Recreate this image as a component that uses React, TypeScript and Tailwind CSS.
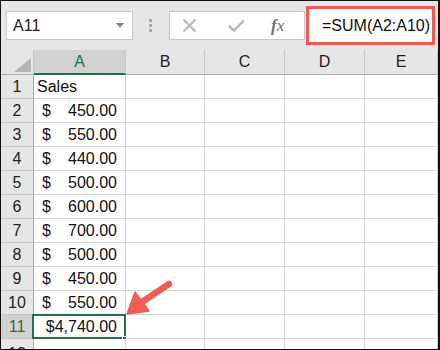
import React from "react";

const rows: { n: number; v: string }[] = [
  { n: 2, v: "450.00" },
  { n: 3, v: "550.00" },
  { n: 4, v: "440.00" },
  { n: 5, v: "500.00" },
  { n: 6, v: "600.00" },
  { n: 7, v: "700.00" },
  { n: 8, v: "500.00" },
  { n: 9, v: "450.00" },
  { n: 10, v: "550.00" },
];

const font = { fontFamily: '"Liberation Sans", Arial, sans-serif' };

function RowHeader({ n, sel }: { n: number; sel?: boolean }) {
  return (
    <div
      className={`flex items-center justify-center border-r border-b border-r-[#ababab] border-b-[#c8c8c8] text-[16px] ${
        sel ? "bg-[#d2d2d2] text-[#217346]" : "bg-[#e6e6e6] text-[#222]"
      }`}
    >
      {n}
    </div>
  );
}

function Cell({ children, className = "" }: { children?: React.ReactNode; className?: string }) {
  return (
    <div className={`relative border-r border-b border-[#d4d4d4] bg-white text-[16px] text-[#111] ${className}`}>
      {children}
    </div>
  );
}

function Empty() {
  return (
    <>
      <Cell />
      <Cell />
      <Cell />
      <Cell />
    </>
  );
}

export default function App() {
  return (
    <div
      className="relative w-[440px] h-[350px] overflow-hidden border-l border-t border-b border-r-2 border-[#111] bg-[#e6e6e6]"
      style={font}
    >
      {/* Toolbar */}
      <div className="flex h-[49px] items-center">
        <div className="ml-[5px] flex h-[29px] w-[127px] items-center justify-between border border-[#c6c6c6] bg-white pl-[6px] pr-[8px]">
          <span className="text-[16px] text-[#222]">A11</span>
          <svg width="8" height="5" viewBox="0 0 8 5">
            <path d="M0 0 L8 0 L4 4.5 Z" fill="#7a7a7a" />
          </svg>
        </div>
        <div className="ml-[16px] flex flex-col gap-[2px]">
          <div className="h-[3px] w-[3px] bg-[#a8a8a8]" />
          <div className="h-[3px] w-[3px] bg-[#a8a8a8]" />
          <div className="h-[3px] w-[3px] bg-[#a8a8a8]" />
        </div>
        <div className="ml-[17px] flex h-[29px] w-[136px] items-center border border-[#c6c6c6] bg-white">
          <svg className="ml-[12px]" width="15" height="15" viewBox="0 0 15 15">
            <path d="M1.5 1.5 L13.5 13.5 M13.5 1.5 L1.5 13.5" stroke="#b5b5b5" strokeWidth="2" fill="none" />
          </svg>
          <svg className="ml-[31px]" width="17" height="13" viewBox="0 0 17 13">
            <path d="M1 7 L6 11.5 L16 1.5" stroke="#b5b5b5" strokeWidth="2.4" fill="none" />
          </svg>
          <span
            className="ml-[26px] text-[17px] italic text-[#707070]"
            style={{ fontFamily: '"Liberation Serif", "Times New Roman", serif' }}
          >
            <span className="font-bold">f</span>x
          </span>
        </div>
        <div className="ml-[1px] flex h-[39px] w-[129px] items-center border-[3px] border-[#f05a50] bg-white pl-[13px]">
          <span className="text-[16px] text-[#111]">=SUM(A2:A10)</span>
        </div>
      </div>

      {/* Grid */}
      <div className="grid grid-cols-[33px_92px_79px_80px_80px_1fr] grid-rows-[25px_repeat(12,24px)]">
        {/* header row */}
        <div className="relative border-r border-b border-r-[#c8c8c8] border-b-[#ababab] bg-[#e6e6e6]">
          <svg className="absolute left-[13px] top-[8px]" width="17" height="14" viewBox="0 0 17 14">
            <path d="M17 0 L17 14 L0 14 Z" fill="#b4b4b4" />
          </svg>
        </div>
        <div className="flex items-center justify-center border-r border-b-2 border-r-[#c8c8c8] border-b-[#217346] bg-[#d2d2d2] text-[16px] text-[#217346]">
          A
        </div>
        {["B", "C", "D", "E"].map((c) => (
          <div
            key={c}
            className="flex items-center justify-center border-r border-b border-r-[#c8c8c8] border-b-[#ababab] bg-[#e6e6e6] text-[16px] text-[#222]"
          >
            {c}
          </div>
        ))}

        {/* row 1 */}
        <RowHeader n={1} />
        <Cell className="flex items-center pl-[3px]">Sales</Cell>
        <Empty />

        {rows.map((r) => (
          <React.Fragment key={r.n}>
            <RowHeader n={r.n} />
            <Cell className="flex items-center justify-between pl-[8px] pr-[8px]">
              <span>$</span>
              <span>{r.v}</span>
            </Cell>
            <Empty />
          </React.Fragment>
        ))}

        {/* row 11 */}
        <RowHeader n={11} sel />
        <Cell className="flex items-center justify-end pr-[8px]">
          <span>$4,740.00</span>
          <div className="absolute left-[-2px] top-[-1px] right-[-1px] bottom-[-1px] border-2 border-[#217346]" />
          <div className="absolute right-[-3px] bottom-[-4px] h-[6px] w-[6px] border border-white bg-[#217346]" />
        </Cell>
        <Empty />

        {/* row 12 */}
        <div className="flex items-start justify-center border-r border-r-[#ababab] bg-[#e6e6e6] pt-[3px] text-[16px] text-[#222]">
          12
        </div>
        <Cell />
        <Cell />
        <Cell />
        <Cell />
        <Cell />
      </div>

      {/* Arrow annotation */}
      <svg className="pointer-events-none absolute left-0 top-0" width="440" height="350" viewBox="0 0 440 350">
        <line x1="168" y1="283" x2="138" y2="303" stroke="#f25c54" strokeWidth="6.5" strokeLinecap="round" />
        <path d="M126 313 L134 291 L148 310 Z" fill="#f25c54" stroke="#f25c54" strokeWidth="1.5" strokeLinejoin="round" />
      </svg>
    </div>
  );
}
